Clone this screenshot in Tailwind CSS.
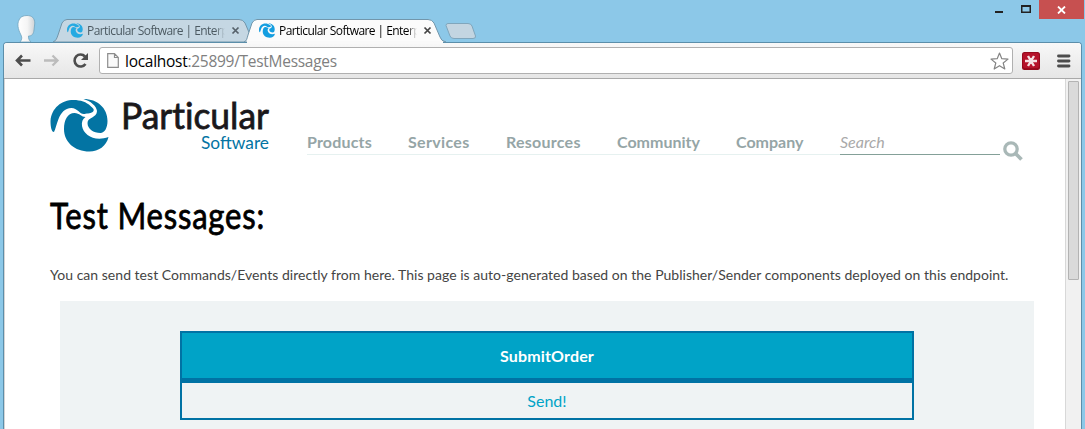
<!DOCTYPE html>
<html lang="en">
<head>
<meta charset="utf-8">
<title>Particular Software</title>
<script src="https://cdn.jsdelivr.net/npm/@tailwindcss/browser@4"></script>
</head>
<body class="w-[1085px] h-[429px] overflow-hidden bg-[#8cc8e8] font-['Lato',sans-serif] flex flex-col">
<svg class="hidden">
  <symbol id="swirl" viewBox="0 0 58 53">
    <path d="M3.500 33C1 33 0 28 0 22C1 9 11 1 23 1C30 1 36 3 40 7C42 9 44 10 43 12C41 15 37 14 34 15C30 16 27 9 21 9C14 9 10.500 14 8 20C6 25 5 30 3.500 33Z"/>
    <path d="M33 0C47 0 57 9 57 22C57 29 54 34 50 34C43 34 37 30 37 24C37 18 46.500 19 46.500 12C46 7 40 2 33 0Z"/>
    <path d="M13.500 30C13.500 21 17 14 24 14C29 14 31 18 35 18C32 20 31 23 31.500 27C33 36 44 43 58 38C56 47 48 52.500 39 52.500C24 52.500 13.500 43 13.500 30Z"/>
  </symbol>
</svg>
<header class="h-[42px] flex items-end shrink-0">
  <svg class="w-[26px] h-[28px] ml-[15px] shrink-0" viewBox="0 0 26 28"><defs><linearGradient id="hd" x2="1"><stop stop-color="#fff"/><stop offset=".55" stop-color="#f5f5f5"/><stop offset="1" stop-color="#cfd3d6"/></linearGradient></defs><path d="M5 28C7.500 25 7 23 5.500 20C3 15 2 10 4 6C5 3 8 1.500 12 1.500C17 1.500 19.500 4 19.800 9L19 16C18.500 20 17 22 13.500 22C13.500 25 14 26 16 28Z" fill="url(#hd)" stroke="#71a5bf" stroke-width=".8"/></svg>
  <div class="relative w-[206px] h-[24px] ml-[11px] shrink-0">
    <svg class="absolute inset-0" width="206" height="24"><path d="M1 24C4 23 5 20 6 17L10 5Q12 1.500 15 1.500H187Q191 1.500 193 5L199 19Q200 23 204 24Z" fill="#c5d7e3" stroke="#7296ab"/></svg>
    <div class="relative flex items-center h-full pl-[15px] pt-[2px] pb-[1px]">
      <svg class="w-[16px] h-[15px] fill-[#26aae2] shrink-0"><use href="#swirl"/></svg>
      <span class="ml-[4px] w-[138px] overflow-hidden whitespace-nowrap font-['Open_Sans',sans-serif] text-[12px] tracking-[-0.560px] leading-[18px] text-[#4c5a62] [mask-image:linear-gradient(to_right,#000_93%,transparent)]">Particular Software | Enterprise</span>
      <svg class="ml-[6px] shrink-0" width="9" height="9"><path d="M1.500 1.500l6 6m0-6l-6 6" stroke="#56616a" stroke-width="1.700"/></svg>
    </div>
  </div>
  <div class="relative w-[206px] h-[24px] -ml-[14px] z-10 shrink-0">
    <svg class="absolute inset-0" width="206" height="24"><path d="M0 24C3 23 3 20 4 17L8 5Q10 1.500 13 1.500H184Q188 1.500 190 5L196 19Q197 23 202 24Z" fill="#fbfbfb" stroke="#7296ab"/></svg>
    <div class="absolute left-[3px] top-[23px] w-[196px] h-[3px] bg-[#f9f9f9]"></div>
    <div class="relative flex items-center h-full pl-[15px] pt-[2px] pb-[1px]">
      <svg class="w-[16px] h-[15px] fill-[#159ee0] shrink-0"><use href="#swirl"/></svg>
      <span class="ml-[4px] w-[138px] overflow-hidden whitespace-nowrap font-['Open_Sans',sans-serif] text-[12px] tracking-[-0.560px] leading-[18px] text-black [mask-image:linear-gradient(to_right,#000_93%,transparent)]">Particular Software | Enterprise</span>
      <svg class="ml-[6px] shrink-0" width="9" height="9"><path d="M1.500 1.500l6 6m0-6l-6 6" stroke="#444" stroke-width="1.700"/></svg>
    </div>
  </div>
  <svg class="-ml-[6px] mb-[2px] shrink-0" width="34" height="18"><path d="M2 3.500Q2 1.500 4 1.500H24Q27 1.500 28 4L31.500 14Q32 16.500 29 16.500H10Q7 16.500 6 14Z" fill="#c3d5e1" stroke="#80a6bc"/></svg>
  <div class="ml-auto self-start flex h-[19px] mr-[1px] shrink-0">
    <svg width="44" height="19"><path d="M0 12H8" stroke="#222" stroke-width="2"/><path d="M26.750 5.750H35.250V12.250H26.750Z" fill="none" stroke="#222" stroke-width="1.500"/><path d="M26 6H36" stroke="#222" stroke-width="2"/></svg>
    <div class="w-[45px] bg-[#c75050] flex items-center justify-center"><svg width="9" height="8"><path d="M1 .5l7 7m0-7l-7 7" stroke="#fff" stroke-width="1.800"/></svg></div>
  </div>
</header>
<div class="flex-1 min-h-0 ml-[3px] w-[1079px] border-x border-t border-[#5b8eaa] rounded-t-[4px] flex flex-col overflow-hidden bg-white">
  <div class="h-[36px] shrink-0 bg-linear-to-b from-[#f8f8f8] to-[#e6e6e6] border-b border-[#a9a9a9] flex items-center">
    <svg class="ml-[10px]" width="18" height="16"><path d="M16.500 7.500H3M8 2.500L3 7.500L8 12.500" fill="none" stroke="#4d4d4d" stroke-width="2.600"/></svg>
    <svg class="ml-[11px]" width="18" height="16"><path d="M1 7.500H14M9.500 2.500L14.500 7.500L9.500 12.500" fill="none" stroke="#bcbcbc" stroke-width="2.300"/></svg>
    <svg class="ml-[11px]" width="18" height="17"><path d="M13.500 12A6 6 0 1 1 13 4.500" fill="none" stroke="#4d4d4d" stroke-width="2.600"/><path d="M16 1V8H9Z" fill="#4d4d4d"/></svg>
    <div class="ml-[9px] w-[914px] h-[27px] bg-white border border-[#b0b0b0] rounded-[3px] flex items-center">
      <svg class="ml-[7px] shrink-0" width="12" height="15"><path d="M.7.700H7.500L11.300 4.500V14.300H.7Z M7.500.700V4.500H11.300" fill="#fafafa" stroke="#8d8d8d" stroke-width="1.200"/></svg>
      <span class="ml-[6px] font-['Open_Sans',sans-serif] text-[15.500px] leading-[20px] tracking-[-0.280px] whitespace-nowrap text-[#808080]"><span class="text-black">localhost</span>:25899/TestMessages</span>
      <svg class="ml-auto mr-[3px]" width="19" height="18" viewBox="0 0 19 18"><path d="M9.500 1L11.800 6.700L18 7.100L13.200 11L14.800 17L9.500 13.700L4.200 17L5.800 11L1 7.100L7.200 6.700Z" fill="#fff" stroke="#858585" stroke-width="1.200" stroke-linejoin="round"/></svg>
    </div>
    <svg class="ml-[9px]" width="18" height="18"><rect width="18" height="18" rx="2.500" fill="#960a1d"/><rect x="1" y="1" width="16" height="15" rx="2" fill="#b5122a"/><path d="M9 6V12M3 9H15" stroke="#f5e3e5" stroke-width="2.400"/><path d="M6 4L12 14M12 4L6 14" stroke="#f5e3e5" stroke-width="2.400"/></svg>
    <svg class="ml-[17px]" width="14" height="14"><path d="M1.500 2H12M1.500 7H12M1.500 12H12" stroke="#4d4d4d" stroke-width="2.900" stroke-linecap="round"/></svg>
  </div>
  <div class="flex-1 min-h-0 flex border-l border-[#d5d5d5]">
    <main class="w-[1060px] shrink-0 overflow-hidden">
      <div class="h-[84px] flex pl-[45px]">
        <svg class="mt-[20px] shrink-0 fill-[#0374a3]" width="59" height="53" viewBox="0 0 59 53"><use href="#swirl" width="59" height="53"/></svg>
        <svg class="mt-[12px] ml-[9px] shrink-0" width="156" height="64">
          <text x="3" y="38" font-family="Lato" font-size="37" fill="#1a181b" stroke="#1a181b" stroke-width=".8" textLength="148" lengthAdjust="spacingAndGlyphs" style="font-variant-ligatures:none">Particular</text>
          <text x="83" y="58" font-family="Lato" font-size="17.500" fill="#0374a3" textLength="68" lengthAdjust="spacingAndGlyphs">Software</text>
        </svg>
        <nav class="ml-[33px] mt-[51px] h-[25px] w-[533px] shrink-0 border-b border-[#e6f1f0] flex gap-[35px] text-[16px] leading-[24px] font-bold text-[#95a5a6] whitespace-nowrap">
          <a class="w-[66px] tracking-[0.180px]">Products</a><a class="w-[63px] tracking-[0.320px]">Services</a><a class="w-[76px] tracking-[0.250px]">Resources</a><a class="w-[84px]">Community</a><a>Company</a>
        </nav>
        <div class="mt-[51px] h-[25px] w-[160px] shrink-0 border-b border-[#84a098] text-[16px] leading-[24px] italic text-[#a9a9a9]">Search</div>
        <svg class="mt-[62px] ml-[3px] shrink-0" width="21" height="21"><circle cx="8" cy="8" r="6.200" fill="none" stroke="#a9b8b7" stroke-width="3.300"/><path d="M12.500 12.500L18.500 18.500" stroke="#a9b8b7" stroke-width="3.700"/></svg>
      </div>
      <h1 class="h-[76px] pt-[29px] pl-[43px]"><svg width="230" height="47"><text transform="translate(2 37) scale(.85 1)" font-family="Lato" font-weight="400" font-size="36.500" fill="#000" stroke="#000" stroke-width=".8" textLength="252" lengthAdjust="spacing">Test Messages:</text></svg></h1>
      <p class="h-[62px] pt-[25px] pl-[45px] text-[14px] leading-[22px] tracking-[0.027px] whitespace-nowrap text-[#444]">You can send test Commands/Events directly from here. This page is auto-generated based on the Publisher/Sender components deployed on this endpoint.</p>
      <section class="ml-[55px] w-[974px] h-[130px] bg-[#eff3f4] pt-[30px] flex flex-col items-center">
        <div class="w-[734px] border-2 border-[#0072a4] text-center text-[16px]">
          <div class="h-[50px] bg-[#00a3c7] border-b-5 border-[#0072a4] text-white font-bold leading-[46px] tracking-[0.150px]">SubmitOrder</div>
          <div class="h-[35px] leading-[35px] text-[#00a3c7]">Send!</div>
        </div>
      </section>
    </main>
    <div class="flex-1 bg-[#f1f1f1] border-l border-[#d8d8d8] pt-[2px] pl-[2px]"><div class="w-[11px] h-[199px] bg-[#dadada] border border-[#b3b3b3] rounded-[1px]"></div></div>
  </div>
</div>
</body>
</html>
